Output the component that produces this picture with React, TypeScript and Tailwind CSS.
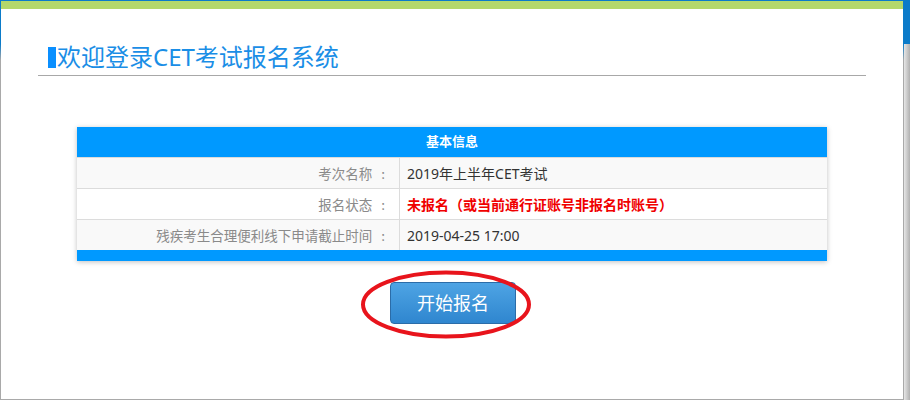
import React from "react";

const rows = [
  { label: "考次名称", value: "2019年上半年CET考试", tone: "normal", bg: "bg-[#f9f9f9]" },
  { label: "报名状态", value: "未报名（或当前通行证账号非报名时账号）", tone: "red", bg: "bg-white" },
  { label: "残疾考生合理便利线下申请截止时间", value: "2019-04-25 17:00", tone: "normal", bg: "bg-[#f9f9f9]" },
];

export default function App() {
  return (
    <div
      className="relative flex h-[400px] w-[910px] overflow-hidden bg-[linear-gradient(to_bottom,#0b7bc9_0px,#0b7bc9_44px,#a9a9a9_60px,#a9a9a9_100%)]"
      style={{ fontFamily: '"Noto Sans", "Noto Sans CJK SC", sans-serif' }}
    >
      {/* main panel */}
      <div className="ml-[1px] mt-[1px] flex h-[398px] w-[902px] flex-col bg-white">
        <div className="h-[8px] bg-[#b4d86b]" />

        {/* title */}
        <div className="mx-[37px] mt-[33px] border-b border-[#a8a8a8] pb-[3px] pl-[10px]">
          <h1 className="flex items-center text-[24px] leading-[30px] text-[#1a8ee6]">
            <span className="mr-[1px] inline-block h-[21px] w-[8px] bg-[#0a8fff]" />
            欢迎登录CET考试报名系统
          </h1>
        </div>

        {/* info table */}
        <div className="mx-[76px] mt-[51px] shadow-[0_1px_5px_rgba(0,0,0,0.25)]">
          <div className="flex h-[30px] items-center justify-center bg-[#0099ff] text-[13px] font-bold text-white">
            基本信息
          </div>
          {rows.map((r) => (
            <div key={r.label} className={`flex h-[31px] border-t border-[#dcdcdc] ${r.bg}`}>
              <div
                className="flex w-[323px] items-center justify-end border-r border-[#dcdcdc] pr-[14px] text-[13.5px] text-[#8a8a8a]"
                style={{ fontFamily: '"Noto Sans CJK SC", sans-serif' }}
              >
                {r.label}
                <span className="ml-[9px]">:</span>
              </div>
              <div
                className={`flex flex-1 items-center pl-[7px] text-[14px] ${
                  r.tone === "red" ? "font-bold text-[#f00000]" : "text-[#333]"
                }`}
              >
                {r.value}
              </div>
            </div>
          ))}
          <div className="h-[11px] bg-[#0099ff]" />
        </div>

        {/* action */}
        <div className="relative mt-[21px] flex justify-center">
          <button className="ml-[2px] h-[42px] w-[126px] rounded-[4px] border border-[#2b6ca8] bg-[linear-gradient(to_bottom,#4ea4e4,#2f86cf)] text-[18px] text-white">
            开始报名
          </button>
          <svg
            className="pointer-events-none absolute left-[359px] top-[-12px]"
            width="174"
            height="70"
            viewBox="0 0 174 70"
          >
            <ellipse cx="86" cy="34.5" rx="83" ry="32" fill="none" stroke="#e8141c" strokeWidth="4" />
          </svg>
        </div>
      </div>

      {/* right gutter */}
      <div className="ml-[1px] flex h-full flex-1 flex-col">
        <div className="h-[44px] bg-[#0b7bc9]" />
        <div className="flex-1 bg-[linear-gradient(to_right,#e6e6e6,#b0b0b0)]" />
      </div>
    </div>
  );
}
